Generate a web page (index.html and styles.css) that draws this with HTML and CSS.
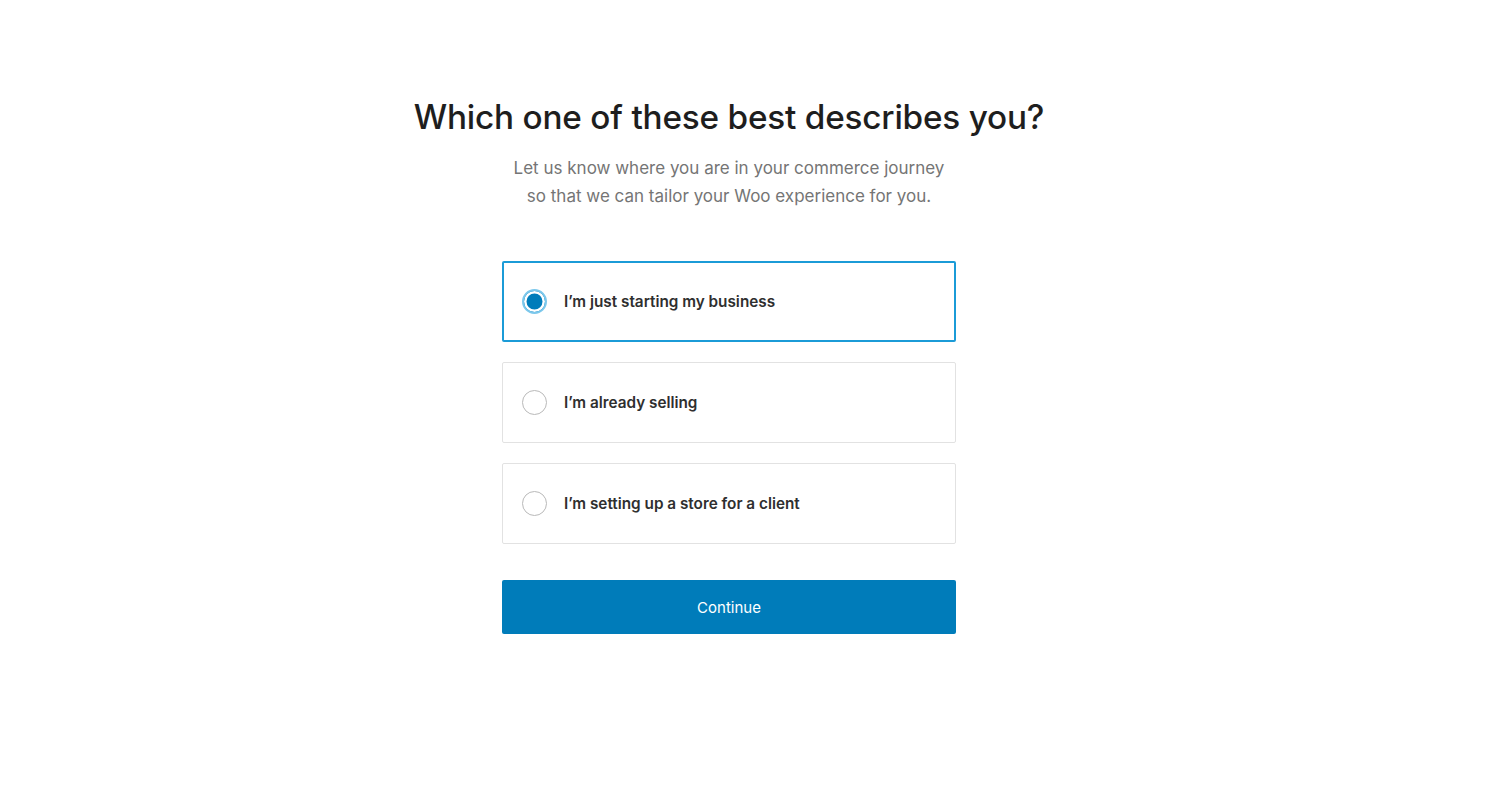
FILE: index.html
```html
<!DOCTYPE html>
<html>
  <head>
    <title>Which one of these best describes you?</title>
    <link rel="stylesheet" href="styles.css">
  </head>
  <body>
    <div class="wizard">
      <h1>Which one of these best describes you?</h1>
      <p class="intro">Let us know where you are in your commerce journey<br>so that we can tailor your Woo experience for you.</p>
      <form class="choices">
        <label class="choice selected">
          <span class="radio checked"></span>
          <span class="choice-text">I’m just starting my business</span>
        </label>
        <label class="choice">
          <span class="radio"></span>
          <span class="choice-text">I’m already selling</span>
        </label>
        <label class="choice">
          <span class="radio"></span>
          <span class="choice-text">I’m setting up a store for a client</span>
        </label>
        <button type="button" class="continue">Continue</button>
      </form>
    </div>
  </body>
</html>
```

FILE: styles.css
```css
html, body {
  margin: 0;
  background: #fff;
  font-family: Inter, "Noto Sans", Arial, sans-serif;
  color: #1e1e1e;
}
.wizard {
  display: flex;
  flex-direction: column;
  align-items: center;
  padding-top: 95px;
  padding-right: 28px;
}
h1 {
  margin: 0;
  font-size: 33.3px;
  font-weight: 500;
  letter-spacing: -0.2px;
  color: #1e1e1e;
  line-height: 44px;
}
.intro {
  margin: 15px 0 0;
  text-align: center;
  font-size: 17px;
  line-height: 28px;
  color: #757575;
}
.choices {
  display: flex;
  flex-direction: column;
  gap: 20px;
  width: 454px;
  margin-top: 51px;
}
.choice {
  display: flex;
  align-items: center;
  height: 81px;
  box-sizing: border-box;
  padding-left: 19px;
  border: 1px solid #e2e2e2;
  border-radius: 2px;
  cursor: pointer;
}
.choice.selected {
  border: 2px solid #1b9bd7;
  padding-left: 18px;
}
.radio {
  width: 25px;
  height: 25px;
  box-sizing: border-box;
  border: 1.5px solid #b9b9b9;
  border-radius: 50%;
  margin-right: 17px;
}
.radio.checked {
  border: 2px solid #7cc8ec;
  background: #007cba;
  box-shadow: inset 0 0 0 2.5px #fff;
}
.choice-text {
  font-size: 15.3px;
  font-weight: 600;
  color: #2f2f2f;
}
.continue {
  margin-top: 16px;
  height: 54px;
  border: none;
  border-radius: 2px;
  background: #007cba;
  color: #fff;
  font-family: inherit;
  font-size: 15px;
  cursor: pointer;
}
```
